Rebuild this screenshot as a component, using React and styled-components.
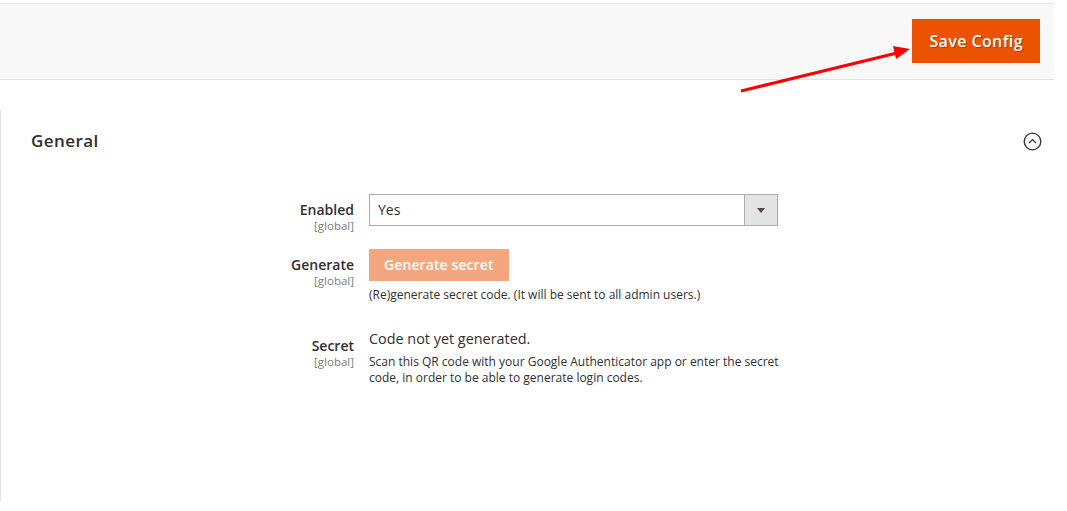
import React from "react";
import styled, { createGlobalStyle } from "styled-components";

const Global = createGlobalStyle`
  html, body { margin: 0; padding: 0; background: #fff; }
  body { font-family: "Open Sans", "Liberation Sans", sans-serif; color: #303030; }
  * { box-sizing: border-box; }
`;

const Page = styled.div`
  position: relative;
  width: 1067px;
  height: 511px;
  padding-top: 3px;
  overflow: hidden;
`;

const Header = styled.header`
  margin-right: 13px;
  height: 77px;
  background: #f8f8f8;
  border-top: 1px solid #e3e3e3;
  border-bottom: 1px solid #e3e3e3;
  display: flex;
  justify-content: flex-end;
  align-items: flex-start;
  padding: 15px 14px 0 0;
`;

const PrimaryButton = styled.button`
  font-family: "Open Sans", "Liberation Sans", sans-serif;
  font-weight: 600;
  font-size: ${(p) => (p.$small ? "14px" : "16px")};
  letter-spacing: ${(p) => (p.$small ? "0.1px" : "0.4px")};
  color: #fff;
  background: #eb5202;
  border: none;
  border-radius: 0;
  height: ${(p) => (p.$small ? "32px" : "44px")};
  padding: 0 ${(p) => (p.$small ? "15px" : "17px")};
  text-shadow: ${(p) => (p.$small ? "none" : "1px 1px 0 rgba(0,0,0,0.25)")};
  opacity: ${(p) => (p.disabled ? 0.5 : 1)};
  cursor: pointer;
  line-height: 1;
`;

const Section = styled.section`
  margin-top: 30px;
  margin-right: 13px;
  height: 391px;
  border-left: 1px solid #e3e3e3;
`;

const TitleRow = styled.div`
  height: 61px;
  display: flex;
  align-items: center;
  justify-content: space-between;
  padding: 0 12px 0 30px;
`;

const Title = styled.h2`
  margin: 0;
  font-size: 17px;
  font-weight: 600;
  letter-spacing: 0.45px;
  color: #303030;
`;

const CollapseWrap = styled.span`
  display: flex;
  margin-top: 2px;
`;

const Form = styled.div`
  margin-top: 23px;
  display: flex;
  flex-direction: column;
`;

const Row = styled.div`
  display: flex;
  align-items: flex-start;
  margin-bottom: ${(p) => p.$gap || 0}px;
`;

const LabelCell = styled.div`
  width: 353px;
  text-align: right;
  padding-top: 7px;
`;

const LabelText = styled.div`
  font-size: 14px;
  font-weight: 600;
  line-height: 18px;
  color: #303030;
`;

const Scope = styled.div`
  font-size: 11.5px;
  line-height: 13px;
  color: #808080;
`;

const Control = styled.div`
  margin-left: 15px;
  width: 409px;
`;

const Select = styled.div`
  height: 32px;
  border: 1px solid #adadad;
  display: flex;
  align-items: stretch;
  background: #fff;
`;

const SelectValue = styled.div`
  flex: 1;
  font-size: 14px;
  line-height: 30px;
  padding-left: 8px;
  color: #303030;
`;

const SelectArrow = styled.div`
  width: 33px;
  background: #e3e3e3;
  border-left: 1px solid #adadad;
  display: flex;
  align-items: center;
  justify-content: center;
  &::after {
    content: "";
    border-left: 4px solid transparent;
    border-right: 4px solid transparent;
    border-top: 5px solid #514943;
  }
`;

const Note = styled.div`
  font-size: 12px;
  line-height: 16px;
  color: #303030;
  margin-top: ${(p) => p.$top || 0}px;
  width: ${(p) => p.$width || "auto"};
`;

const Value = styled.div`
  font-size: 14.4px;
  line-height: 18px;
  color: #303030;
`;

const Arrow = styled.svg`
  position: absolute;
  left: 0;
  top: 0;
  pointer-events: none;
`;

function CollapseIcon() {
  return (
    <svg width="19" height="19" viewBox="0 0 19 19">
      <circle cx="9.5" cy="9.5" r="8.3" fill="none" stroke="#303030" strokeWidth="1.3" />
      <path d="M6 11 L9.5 7.6 L13 11" fill="none" stroke="#303030" strokeWidth="1.3" />
    </svg>
  );
}

export default function App() {
  return (
    <>
      <Global />
      <Page>
        <Header>
          <PrimaryButton>Save Config</PrimaryButton>
        </Header>
        <Section>
          <TitleRow>
            <Title>General</Title>
            <CollapseWrap>
              <CollapseIcon />
            </CollapseWrap>
          </TitleRow>
          <Form>
            <Row $gap={17}>
              <LabelCell>
                <LabelText>Enabled</LabelText>
                <Scope>[global]</Scope>
              </LabelCell>
              <Control>
                <Select>
                  <SelectValue>Yes</SelectValue>
                  <SelectArrow />
                </Select>
              </Control>
            </Row>
            <Row $gap={27}>
              <LabelCell>
                <LabelText>Generate</LabelText>
                <Scope>[global]</Scope>
              </LabelCell>
              <Control>
                <PrimaryButton $small disabled>Generate secret</PrimaryButton>
                <Note $top={6}>(Re)generate secret code. (It will be sent to all admin users.)</Note>
              </Control>
            </Row>
            <Row>
              <LabelCell>
                <LabelText>Secret</LabelText>
                <Scope>[global]</Scope>
              </LabelCell>
              <Control>
                <Value>Code not yet generated.</Value>
                <Note $top={6} $width="416px">
                  Scan this QR code with your Google Authenticator app or enter the secret code, in order to be able to generate login codes.
                </Note>
              </Control>
            </Row>
          </Form>
        </Section>
        <Arrow width="1067" height="511" viewBox="0 0 1067 511">
          <line x1="741" y1="91" x2="897" y2="53" stroke="#ff0000" strokeWidth="3" />
          <polygon points="910,49 893,46 896,59" fill="#ff0000" />
        </Arrow>
      </Page>
    </>
  );
}
